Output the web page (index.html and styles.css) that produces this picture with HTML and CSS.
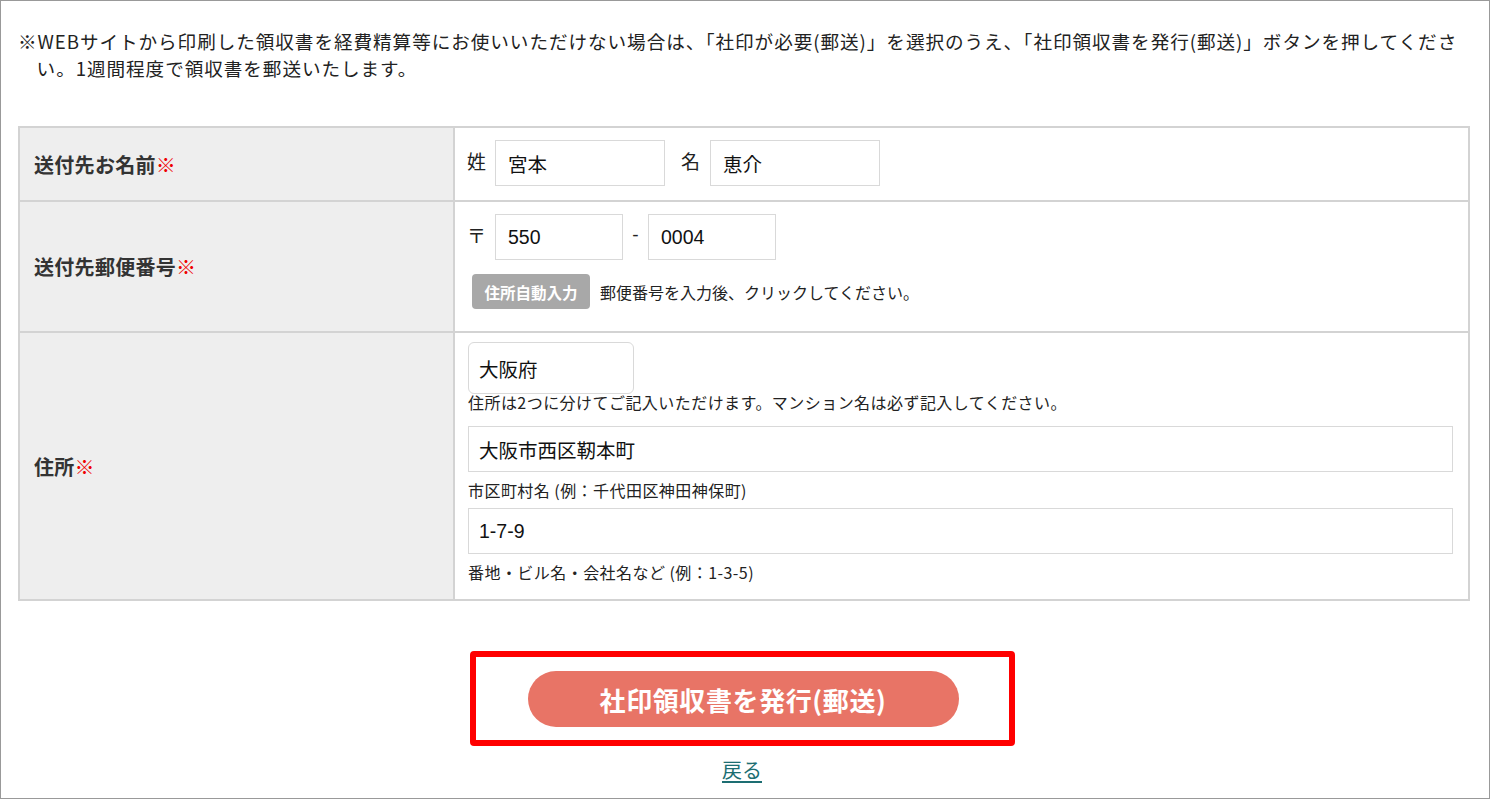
FILE: index.html
```html
<!DOCTYPE html>
<html lang="ja">
<head>
<meta charset="utf-8">
<link rel="stylesheet" href="styles.css">
</head>
<body>
<div class="frame">
  <p class="intro">※WEBサイトから印刷した領収書を経費精算等にお使いいただけない場合は、「社印が必要(郵送)」を選択のうえ、「社印領収書を発行(郵送)」ボタンを押してください。1週間程度で領収書を郵送いたします。</p>

  <table class="form">
    <tr class="row-name">
      <th>送付先お名前<span class="req">※</span></th>
      <td>
        <div class="line">
          <span class="pre">姓</span><span class="field w170">宮本</span>
          <span class="pre pre-gap">名</span><span class="field w170">恵介</span>
        </div>
      </td>
    </tr>
    <tr class="row-zip">
      <th>送付先郵便番号<span class="req">※</span></th>
      <td>
        <div class="line">
          <span class="pre">〒</span><span class="field w128">550</span>
          <span class="dash">-</span><span class="field w128">0004</span>
        </div>
        <div class="auto">
          <span class="auto-btn">住所自動入力</span>
          <span class="auto-note">郵便番号を入力後、クリックしてください。</span>
        </div>
      </td>
    </tr>
    <tr class="row-addr">
      <th>住所<span class="req">※</span></th>
      <td>
        <div class="field pref">大阪府</div>
        <div class="note note-first">住所は2つに分けてご記入いただけます。マンション名は必ず記入してください。</div>
        <div class="field full">大阪市西区靭本町</div>
        <div class="note">市区町村名 (例：千代田区神田神保町)</div>
        <div class="field full">1-7-9</div>
        <div class="note">番地・ビル名・会社名など (例：1-3-5)</div>
      </td>
    </tr>
  </table>

  <div class="actions">
    <div class="highlight">
      <span class="submit">社印領収書を発行(郵送)</span>
    </div>
    <a class="back" href="#">戻る</a>
  </div>
</div>
</body>
</html>
```

FILE: styles.css
```css
* { box-sizing: border-box; }
html, body { margin: 0; padding: 0; background: #fff; }
body {
  font-family: "Liberation Sans", "Noto Sans CJK JP", sans-serif;
  color: #222;
}
.frame {
  width: 1490px;
  height: 799px;
  border: 1px solid #999;
  padding: 26px 17px 0 17px;
  overflow: hidden;
}
.intro {
  margin: 0;
  font-family: "Noto Sans CJK JP", sans-serif;
  font-size: 18.6px;
  line-height: 27px;
  padding-left: 1em;
  text-indent: -1em;
  letter-spacing: 0.95px;
  color: #222;
}
.form {
  margin-top: 45px;
  width: 1452px;
  border-collapse: collapse;
  border: 2px solid #d3d3d3;
}
.form th, .form td {
  border: 2px solid #d3d3d3;
}
.form th {
  width: 435px;
  background: #eeeeee;
  text-align: left;
  font-family: "Noto Sans CJK JP", sans-serif;
  font-weight: bold;
  font-size: 20px;
  letter-spacing: 0.3px;
  color: #333;
  padding: 0 14px;
  vertical-align: middle;
}
.req { color: #e00; font-weight: bold; }
.form td {
  padding: 12px 14px 12px 12px;
  vertical-align: top;
}
.row-name td { height: 74px; }
.row-zip td { height: 131px; padding-bottom: 20px; }
.row-addr td { height: 268px; padding: 9px 14px 13px 13px; }

.line { display: flex; align-items: center; height: 46px; }
.pre {
  font-family: "Noto Sans CJK JP", sans-serif;
  font-size: 19px;
  color: #222;
  width: 28px;
  line-height: 24px;
  margin-top: -4px;
}
.pre-gap { margin-left: 16px; width: 29px; }
.dash {
  font-size: 19px;
  width: 25px;
  text-align: center;
  line-height: 24px;
  margin-top: -4px;
}
.field {
  display: flex;
  align-items: center;
  height: 46px;
  border: 1px solid #d9d9d9;
  background: #fff;
  padding: 0 12px;
  font-family: "Liberation Sans", "Noto Sans CJK JP", sans-serif;
  font-size: 19.5px;
  color: #111;
}
.w170 { width: 170px; }
.w128 { width: 128px; }
.pref {
  width: 166px;
  height: 52px;
  border-radius: 6px;
  padding: 0 10px;
}
.full { width: 985px; padding: 0 10px; }
.auto { display: flex; align-items: center; margin-top: 14px; margin-left: 5px; }
.auto-btn {
  display: inline-flex;
  align-items: center;
  justify-content: center;
  width: 118px;
  height: 35px;
  background: #a8a8a8;
  color: #fff;
  border-radius: 4px;
  font-family: "Noto Sans CJK JP", sans-serif;
  font-weight: bold;
  font-size: 15.5px;
}
.auto-note {
  margin-left: 10px;
  font-family: "Noto Sans CJK JP", sans-serif;
  font-size: 16px;
  color: #222;
}
.note {
  font-family: "Noto Sans CJK JP", sans-serif;
  font-size: 16px;
  line-height: 24px;
  letter-spacing: 0.45px;
  margin: 6px 0;
  color: #222;
}
.note-first { line-height: 20px; margin: -2px 0 14px 0; }
.note:last-child { margin-bottom: 0; }

.actions {
  display: flex;
  flex-direction: column;
  align-items: center;
  margin-top: 50px;
  padding-right: 6px;
}
.highlight {
  border: 6px solid #ff0000;
  border-radius: 4px;
  padding: 14px 50px 13px 52px;
  width: 545px;
}
.submit {
  display: flex;
  align-items: center;
  justify-content: center;
  width: 431px;
  height: 56px;
  border-radius: 28px;
  background: #e87466;
  color: #fff;
  font-family: "Noto Sans CJK JP", sans-serif;
  font-weight: bold;
  font-size: 26px;
  letter-spacing: 0.6px;
}
.back {
  margin-top: 10px;
  font-family: "Noto Sans CJK JP", sans-serif;
  font-size: 20px;
  line-height: 28px;
  color: #1d6e72;
  text-decoration: underline;
  text-underline-offset: 3px;
}
```
